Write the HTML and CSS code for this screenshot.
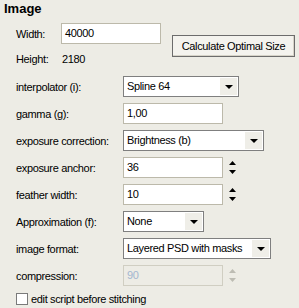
FILE: index.html
```html
<!DOCTYPE html>
<html>
<head>
<meta charset="utf-8">
<link rel="stylesheet" href="styles.css">
</head>
<body>
<div class="panel">
  <h1 class="title">Image</h1>
  <div class="size">
    <div class="size-fields">
      <div class="srow"><span class="slabel">Width:</span><div class="field w100">40000</div></div>
      <div class="srow"><span class="slabel">Height:</span><span class="val">2180</span></div>
    </div>
    <div class="btn">Calculate Optimal Size</div>
  </div>
  <div class="form">
    <span class="lbl">interpolator (i):</span>
    <div class="ctl"><div class="select w116"><span class="stext">Spline 64</span><span class="arrow"><svg width="8" height="4" viewBox="0 0 8 4"><path d="M0 0H8L4 4Z" fill="#000"/></svg></span></div></div>

    <span class="lbl">gamma (g):</span>
    <div class="ctl"><div class="field w100">1,00</div></div>

    <span class="lbl">exposure correction:</span>
    <div class="ctl"><div class="select w141"><span class="stext">Brightness (b)</span><span class="arrow"><svg width="8" height="4" viewBox="0 0 8 4"><path d="M0 0H8L4 4Z" fill="#000"/></svg></span></div></div>

    <span class="lbl">exposure anchor:</span>
    <div class="ctl"><div class="field w100">36</div>
      <div class="spin"><svg width="7" height="4" viewBox="0 0 7 4"><path d="M0 4H7L3.5 0Z" fill="#000"/></svg><svg width="7" height="4" viewBox="0 0 7 4"><path d="M0 0H7L3.5 4Z" fill="#000"/></svg></div></div>

    <span class="lbl">feather width:</span>
    <div class="ctl"><div class="field w100">10</div>
      <div class="spin"><svg width="7" height="4" viewBox="0 0 7 4"><path d="M0 4H7L3.5 0Z" fill="#000"/></svg><svg width="7" height="4" viewBox="0 0 7 4"><path d="M0 0H7L3.5 4Z" fill="#000"/></svg></div></div>

    <span class="lbl">Approximation (f):</span>
    <div class="ctl"><div class="select w81"><span class="stext">None</span><span class="arrow"><svg width="8" height="4" viewBox="0 0 8 4"><path d="M0 0H8L4 4Z" fill="#000"/></svg></span></div></div>

    <span class="lbl">image format:</span>
    <div class="ctl"><div class="select w148"><span class="stext">Layered PSD with masks</span><span class="arrow"><svg width="8" height="4" viewBox="0 0 8 4"><path d="M0 0H8L4 4Z" fill="#000"/></svg></span></div></div>

    <span class="lbl">compression:</span>
    <div class="ctl"><div class="field w100 disabled">90</div>
      <div class="spin"><svg width="7" height="4" viewBox="0 0 7 4"><path d="M0 4H7L3.5 0Z" fill="#bdbcb3"/></svg><svg width="7" height="4" viewBox="0 0 7 4"><path d="M0 0H7L3.5 4Z" fill="#bdbcb3"/></svg></div></div>
  </div>
  <div class="check"><span class="box"></span><span>edit script before stitching</span></div>
</div>
</body>
</html>
```
FILE: styles.css
```css
* { box-sizing: border-box; }
html, body { margin: 0; }
body {
  width: 299px;
  height: 308px;
  overflow: hidden;
  background: #edece5;
  font-family: "Liberation Sans", Arial, sans-serif;
  font-size: 11px;
  letter-spacing: -0.35px;
  color: #000;
}
.panel { padding: 1px 0 0 4px; }
.title {
  margin: 0;
  font-size: 13px;
  font-weight: bold;
  letter-spacing: 0;
  line-height: 16px;
  height: 16px;
}
.size {
  display: flex;
  align-items: center;
  margin: 6px 0 0 12px;
}
.size-fields { display: flex; flex-direction: column; gap: 4px; }
.srow { display: flex; align-items: center; height: 21px; }
.slabel { width: 45px; }
.val { margin-left: 1px; }
.btn {
  margin-left: 11px;
  width: 123px;
  height: 22px;
  border: 1px solid #6c6c6c;
  background: #f4f3ee;
  box-shadow: inset -1px -1px 0 #d6d3c8;
  display: flex;
  align-items: center;
  justify-content: center;
}
.field {
  height: 21px;
  border: 1px solid #bcb9aa;
  background: #fff;
  padding-left: 3px;
  line-height: 19px;
}
.field.disabled { background: #edece5; border-color: #d0cec2; color: #a3b6d0; }
.w100 { width: 100px; }
.w116 { width: 116px; }
.w141 { width: 141px; }
.w81 { width: 81px; }
.w148 { width: 148px; }
.form {
  display: grid;
  grid-template-columns: 107px auto;
  grid-auto-rows: 21px;
  row-gap: 6px;
  align-items: center;
  margin: 7px 0 0 12px;
}
.ctl { display: flex; align-items: center; height: 21px; }
.select {
  display: flex;
  height: 21px;
  border: 1px solid #7f7f7f;
  background: #fff;
}
.stext { flex: 1; padding-left: 3px; line-height: 19px; white-space: nowrap; overflow: hidden; }
.arrow {
  width: 17px;
  margin: 1px;
  background: #efeee8;
  display: flex;
  align-items: center;
  justify-content: center;
}
.spin {
  margin-left: 6px;
  display: flex;
  flex-direction: column;
  gap: 5px;
}
.spin svg { display: block; }
.check {
  display: flex;
  align-items: center;
  gap: 3px;
  margin: 6px 0 0 12px;
  height: 13px;
}
.box {
  width: 12px;
  height: 12px;
  border: 1px solid #7a7a7a;
  background: #fff;
}
```
